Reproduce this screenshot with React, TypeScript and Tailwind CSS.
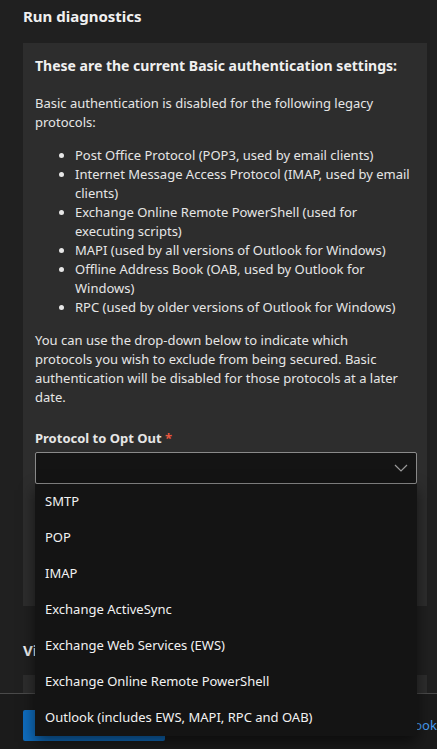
import React from "react";

const options = [
  "SMTP",
  "POP",
  "IMAP",
  "Exchange ActiveSync",
  "Exchange Web Services (EWS)",
  "Exchange Online Remote PowerShell",
  "Outlook (includes EWS, MAPI, RPC and OAB)",
];

export default function App() {
  return (
    <div
      className="w-[437px] h-[749px] overflow-hidden bg-[#202020] text-[#e6e6e6] flex flex-col"
      style={{ fontFamily: '"Noto Sans", "Open Sans", sans-serif' }}
    >
      <div className="flex-1 flex flex-col pl-[23px] pr-[10px]">
        <h1 className="text-[15px] font-bold leading-[20px] mt-[6px] text-[#f0f0f0]">Run diagnostics</h1>
        <div className="mt-[17px] bg-[#2d2d2d] pl-[12px] pr-[10px] pt-[13px] pb-[122px]">
          <h2 className="text-[14px] font-bold leading-[20px] text-[#f0f0f0]">
            These are the current Basic authentication settings:
          </h2>
          <p className="mt-[18px] text-[13px] leading-[19px]">
            Basic authentication is disabled for the following legacy
            <br />
            protocols:
          </p>
          <ul className="mt-[14px] pl-[40px] pr-[2px] list-disc text-[13px] leading-[19px] marker:text-[#e6e6e6]">
            <li>Post Office Protocol (POP3, used by email clients)</li>
            <li>
              Internet Message Access Protocol (IMAP, used by email
              <br />
              clients)
            </li>
            <li>
              Exchange Online Remote PowerShell (used for
              <br />
              executing scripts)
            </li>
            <li>MAPI (used by all versions of Outlook for Windows)</li>
            <li>
              Offline Address Book (OAB, used by Outlook for
              <br />
              Windows)
            </li>
            <li>RPC (used by older versions of Outlook for Windows)</li>
          </ul>
          <p className="mt-[14px] text-[13px] leading-[19px]">
            You can use the drop-down below to indicate which
            <br />
            protocols you wish to exclude from being secured. Basic
            <br />
            authentication will be disabled for those protocols at a later
            <br />
            date.
          </p>
          <div className="mt-[21px] text-[13px] font-bold leading-[20px] text-[#e6e6e6]">
            Protocol to Opt Out <span className="text-[#e9573f]">*</span>
          </div>
          <div className="relative mt-[4px]">
            <div className="h-[32px] bg-[#141414] border border-[#8a8a8a] rounded-[2px] flex items-center justify-end pr-[8px]">
              <svg width="14" height="8" viewBox="0 0 14 8" fill="none">
                <path d="M1 1l6 6 6-6" stroke="#9a9a9a" strokeWidth="1.2" />
              </svg>
            </div>
            <div className="absolute left-0 right-0 top-[32px] z-10 bg-[#141414] shadow-[0_6px_14px_rgba(0,0,0,0.55)]">
              {options.map((o) => (
                <div key={o} className="h-[36px] flex items-center px-[10px] text-[13px] text-[#f2f2f2]">
                  {o}
                </div>
              ))}
            </div>
          </div>
        </div>
        <h2 className="mt-[34px] text-[15px] font-bold leading-[20px] text-[#f0f0f0]">View previous diagnostics</h2>
        <div className="mt-[15px] flex-1 bg-[#2d2d2d]" />
      </div>
      <div className="h-[56px] shrink-0 border-t border-[#4a4a4a] bg-[#1b1b1b] flex items-start pt-[16px] pl-[23px]">
        <button className="shrink-0 w-[142px] h-[31px] bg-[#0f6cbd] rounded-[2px] text-white text-[13px] font-semibold">
          Update settings
        </button>
        <span className="shrink-0 ml-[241px] mt-[6px] text-[13px] text-[#479ef5] whitespace-nowrap">Cookies</span>
      </div>
    </div>
  );
}
